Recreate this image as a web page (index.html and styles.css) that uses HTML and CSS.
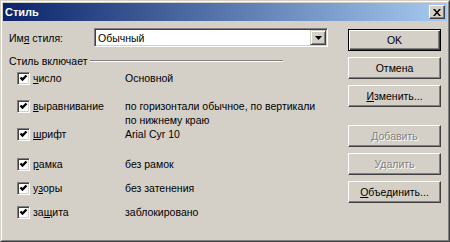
FILE: index.html
```html
<!DOCTYPE html>
<html lang="ru">
  <head>
    <meta charset="UTF-8" />
    <meta name="viewport" content="width=device-width, initial-scale=1.0" />
    <title>Стиль</title>
    <link rel="stylesheet" href="styles.css">
  </head>
  <body>
    <div class="window">
      <div class="frame">
        <div class="titlebar">
          <span class="title">Стиль</span>
          <button class="close" type="button">
            <svg width="8" height="7" viewBox="0 0 8 7"><path d="M0 0h2l2 2.5L6 0h2L5 3.5 8 7H6L4 4.5 2 7H0l3-3.5z" fill="#000"/></svg>
          </button>
        </div>

        <div class="content">
          <div class="main">
            <div class="name-row">
              <label for="styleName">Им<u>я</u> стиля:</label>
              <div class="combo" id="styleName">
                <span class="combo-text">Обычный</span>
                <span class="drop">
                  <svg width="7" height="4" viewBox="0 0 7 4"><path d="M0 0h7L3.5 4z" fill="#000"/></svg>
                </span>
              </div>
            </div>

            <div class="group-head">
              <span>Стиль включает</span>
              <span class="rule"></span>
            </div>

            <div class="items">
              <span class="check"></span><span><u>ч</u>исло</span><span>Основной</span>
              <span class="check"></span><span><u>в</u>ыравнивание</span><span>по горизонтали обычное, по вертикали<br />по нижнему краю</span>
              <span class="check"></span><span><u>ш</u>рифт</span><span>Arial Cyr 10</span>
              <span class="check"></span><span><u>р</u>амка</span><span>без рамок</span>
              <span class="check"></span><span>у<u>з</u>оры</span><span>без затенения</span>
              <span class="check"></span><span>за<u>щ</u>ита</span><span>заблокировано</span>
            </div>
          </div>

          <div class="buttons">
            <button class="btn default" type="button">OK</button>
            <button class="btn" type="button">Отмена</button>
            <button class="btn" type="button"><u>И</u>зменить...</button>
            <button class="btn disabled spaced" type="button">Добавить</button>
            <button class="btn disabled" type="button">Удалить</button>
            <button class="btn" type="button"><u>О</u>бъединить...</button>
          </div>
        </div>
      </div>
    </div>
  </body>
</html>
```

FILE: styles.css
```css
body {
  margin: 0;
  font-family: "Liberation Sans", Arial, sans-serif;
  font-size: 10.5px;
  color: #000;
  background-color: #d4d0c8;
}

.window {
  width: 450px;
  height: 242px;
  box-sizing: border-box;
  border: 1px solid;
  border-color: #d4d0c8 #404040 #404040 #d4d0c8;
  background-color: #d4d0c8;
}

.frame {
  height: 100%;
  box-sizing: border-box;
  border: 1px solid;
  border-color: #fff #808080 #808080 #fff;
  padding: 1px;
}

.titlebar {
  height: 18px;
  display: flex;
  align-items: center;
  justify-content: space-between;
  padding: 0 2px;
  background: linear-gradient(to right, #0a246a, #a6caf0);
}

.title {
  color: #fff;
  font-weight: bold;
  font-size: 11px;
}

.close {
  width: 16px;
  height: 14px;
  padding: 0;
  display: flex;
  align-items: center;
  justify-content: center;
  background-color: #d4d0c8;
  border: 1px solid;
  border-color: #fff #404040 #404040 #fff;
  box-shadow: inset -1px -1px 0 #808080;
}

.content {
  display: flex;
  padding: 7px 6px 0 6px;
}

.main {
  flex: 1;
}

.name-row {
  display: flex;
  align-items: center;
  height: 19px;
}

.name-row label {
  width: 85px;
}

.combo {
  width: 234px;
  height: 19px;
  box-sizing: border-box;
  display: flex;
  align-items: center;
  justify-content: space-between;
  background-color: #fff;
  border: 1px solid;
  border-color: #808080 #fff #fff #808080;
  box-shadow: inset 1px 1px 0 #404040, inset -1px -1px 0 #d4d0c8;
  padding: 1px 1px 1px 3px;
}

.drop {
  width: 16px;
  height: 15px;
  box-sizing: border-box;
  display: flex;
  align-items: center;
  justify-content: center;
  background-color: #d4d0c8;
  border: 1px solid;
  border-color: #d4d0c8 #404040 #404040 #d4d0c8;
  box-shadow: inset 1px 1px 0 #fff, inset -1px -1px 0 #808080;
}

.group-head {
  display: flex;
  align-items: center;
  gap: 3px;
  height: 14px;
  margin-top: 7px;
  width: 274px;
}

.rule {
  flex: 1;
  border-top: 1px solid #808080;
  border-bottom: 1px solid #fff;
}

.items {
  display: grid;
  grid-template-columns: 13px 89px auto;
  grid-template-rows: 28px 28px 30px 24px 24px 14px;
  column-gap: 3px;
  margin-top: 3px;
  padding-left: 8px;
  line-height: 14px;
}

.check {
  width: 13px;
  height: 13px;
  box-sizing: border-box;
  margin-top: 1px;
  background-color: #fff;
  border: 1px solid;
  border-color: #808080 #fff #fff #808080;
  box-shadow: inset 1px 1px 0 #404040, inset -1px -1px 0 #d4d0c8;
  background-image: url("data:image/svg+xml,%3Csvg xmlns='http://www.w3.org/2000/svg' width='11' height='11'%3E%3Cpath d='M2.5 4.5l2 2 4-4' stroke='%23000' stroke-width='2.4' fill='none'/%3E%3C/svg%3E");
  background-repeat: no-repeat;
}

.buttons {
  width: 93px;
  margin-left: 8px;
  margin-top: 1px;
  display: flex;
  flex-direction: column;
  gap: 6px;
}

.btn {
  height: 22px;
  padding: 0;
  font-family: inherit;
  font-size: 10.5px;
  color: #000;
  background-color: #d4d0c8;
  border: 1px solid;
  border-color: #fff #404040 #404040 #fff;
  box-shadow: inset -1px -1px 0 #808080;
}

.default {
  border: 1px solid #000;
  box-shadow: inset 1px 1px 0 #fff, inset -1px -1px 0 #404040, inset -2px -2px 0 #808080;
}

.disabled {
  color: #808080;
  text-shadow: 1px 1px 0 #fff;
}

.spaced {
  margin-top: 12px;
}
```
